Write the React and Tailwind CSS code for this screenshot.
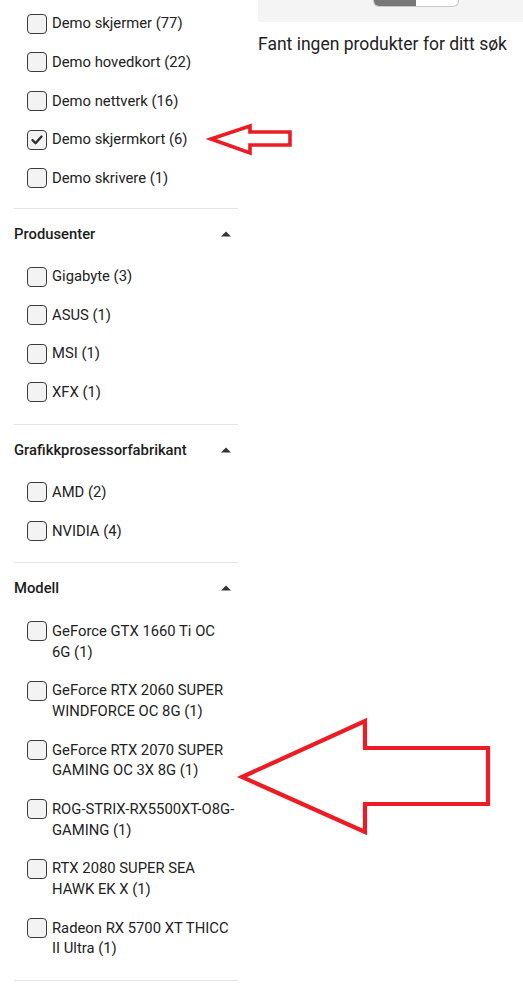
const sections = [
    {
        title: null,
        items: [
            { label: "Demo skjermer (77)" },
            { label: "Demo hovedkort (22)" },
            { label: "Demo nettverk (16)" },
            { label: "Demo skjermkort (6)", checked: true },
            { label: "Demo skrivere (1)" },
        ],
    },
    {
        title: "Produsenter",
        items: [
            { label: "Gigabyte (3)" },
            { label: "ASUS (1)" },
            { label: "MSI (1)" },
            { label: "XFX (1)" },
        ],
    },
    {
        title: "Grafikkprosessorfabrikant",
        items: [{ label: "AMD (2)" }, { label: "NVIDIA (4)" }],
    },
    {
        title: "Modell",
        items: [
            { label: "GeForce GTX 1660 Ti OC 6G (1)" },
            { label: "GeForce RTX 2060 SUPER WINDFORCE OC 8G (1)" },
            { label: "GeForce RTX 2070 SUPER GAMING OC 3X 8G (1)" },
            { label: "ROG-STRIX-RX5500XT-O8G-GAMING (1)" },
            { label: "RTX 2080 SUPER SEA HAWK EK X (1)" },
            { label: "Radeon RX 5700 XT THICC II Ultra (1)" },
        ],
    },
];

function Checkbox({ checked }) {
    return (
        <span className="mt-[0.4px] flex h-5 w-5 shrink-0 items-center justify-center rounded-[4px] border border-[#3a3a3a] bg-[#f3f3f3]">
            {checked && (
                <svg width="20" height="20" viewBox="0 0 20 20">
                    <path
                        d="M5 10.2 L8.4 13.6 L15 6.2"
                        fill="none"
                        stroke="#2f2f2f"
                        strokeWidth="2.6"
                        strokeLinecap="round"
                        strokeLinejoin="round"
                    />
                </svg>
            )}
        </span>
    );
}

function FilterItem({ label, checked }) {
    return (
        <li className="flex items-start gap-[5px] py-[8.9px] pl-[13px] text-[14.8px] leading-[20.8px] text-[#222]">
            <Checkbox checked={checked} />
            <span className="w-[183px]">{label}</span>
        </li>
    );
}

function ArrowDropUp() {
    return (
        <svg width="24" height="24" viewBox="0 0 24 24" className="shrink-0">
            <path d="M7 14.5l5-5 5 5z" fill="#333" />
        </svg>
    );
}

function Section({ title, items, first }) {
    return (
        <div className="border-b border-[#e6e6e6]">
            {title && (
                <div className="mt-[15px] flex h-5 items-center justify-between text-[14.8px] font-medium text-[#1c1c1c]">
                    <span>{title}</span>
                    <ArrowDropUp />
                </div>
            )}
            <ul
                className={
                    first ? "pt-[4.5px] pb-[10.5px]" : "mt-[13.5px] pb-3"
                }
            >
                {items.map((item) => (
                    <FilterItem key={item.label} {...item} />
                ))}
            </ul>
        </div>
    );
}

export default function App() {
    return (
        <div
            className="relative h-[984px] w-[523px] overflow-hidden bg-white"
            style={{ fontFamily: "Roboto, 'Liberation Sans', sans-serif" }}
        >
            <div className="flex">
                <aside className="ml-[14px] w-[224px] shrink-0">
                    {sections.map((s, i) => (
                        <Section key={i} {...s} first={i === 0} />
                    ))}
                </aside>

                <main className="ml-[20px] flex-1">
                    <div className="h-[22px] bg-[#f4f4f4] pl-[115px]">
                        <div className="flex h-[7px] w-[86px] overflow-hidden rounded-b-[6px] border border-t-0 border-[#c9c9c9] bg-white">
                            <div className="w-[42px] bg-[#777]" />
                        </div>
                    </div>
                    <p className="mt-[10px] whitespace-nowrap text-[17.5px] leading-6 text-[#222]">
                        Fant ingen produkter for ditt søk
                    </p>
                </main>
            </div>

            <svg
                className="pointer-events-none absolute left-0 top-0"
                width="523"
                height="984"
            >
                <polygon
                    points="211,139 250,126 250,132 290,132 290,145 250,145 250,153"
                    fill="none"
                    stroke="#ed1c24"
                    strokeWidth="3.6"
                />
                <polygon
                    points="242,777 365,721 365,748 488,748 488,804 365,804 365,832"
                    fill="none"
                    stroke="#ed1c24"
                    strokeWidth="4.2"
                />
            </svg>
        </div>
    );
}
